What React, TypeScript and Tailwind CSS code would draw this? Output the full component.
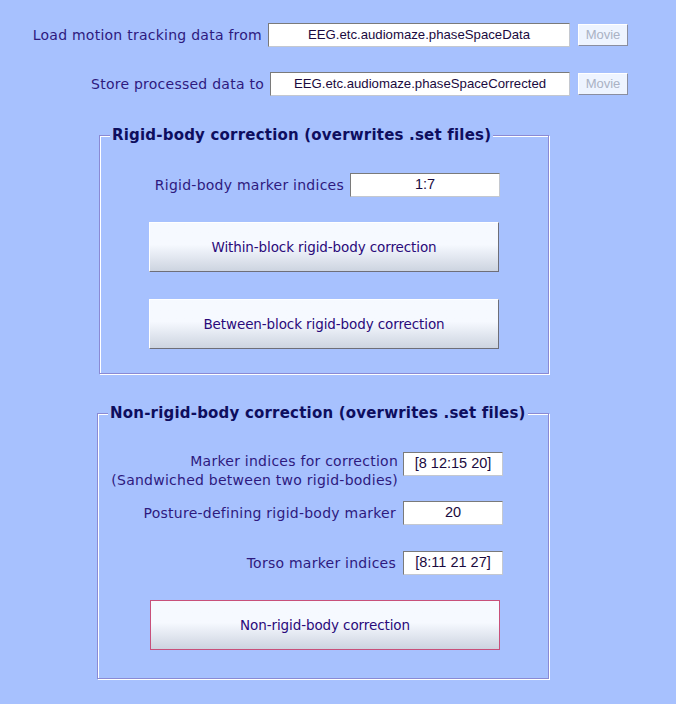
import type { ReactNode } from 'react';

const labelCls = "text-[14px] text-[#2e1a7e] tracking-[0.25px] font-['DejaVu_Sans',sans-serif] leading-[19px] whitespace-nowrap";

function Field({ value, className = '' }: { value: string; className?: string }) {
  return (
    <div
      className={`h-[24px] bg-white border border-t-[#7a7a7a] border-l-[#7a7a7a] border-b-[#c4c8d0] border-r-[#c4c8d0] flex items-center justify-center text-[#1a0a3e] font-['Liberation_Sans',sans-serif] ${className}`}
    >
      {value}
    </div>
  );
}

function MovieButton() {
  return (
    <div className="w-[50px] h-[22px] bg-[#eef4ff] border border-t-white border-l-white border-b-[#8a8ea0] border-r-[#8a8ea0] flex items-center justify-center text-[13px] text-[#aab2c4] font-['Liberation_Sans',sans-serif]">
      Movie
    </div>
  );
}

function BigButton({ children, danger = false }: { children: ReactNode; danger?: boolean }) {
  return (
    <button
      className={`${danger ? 'w-[350px] outline outline-1 -outline-offset-1 outline-[#c8507a]' : 'w-[350px]'} h-[50px] bg-gradient-to-b from-[#f6f9ff] from-45% to-[#cdd4e0] border border-t-white border-l-white border-b-[#6e6e78] border-r-[#6e6e78] text-[13.5px] text-[#2a0a7a] font-['DejaVu_Sans',sans-serif] tracking-[-0.1px]`}
    >
      {children}
    </button>
  );
}

function GroupBox({ title, children, className = '' }: { title: string; children: ReactNode; className?: string }) {
  return (
    <div className={`relative border border-[#8a8ad4] shadow-[inset_1px_1px_0_#ffffff,1px_1px_0_#ffffff] ${className}`}>
      <div className="absolute left-[10px] -top-[12px] bg-[#a7c1fe] px-[2px] text-[15px] font-bold text-[#0e0e5e] tracking-[0.2px] font-['DejaVu_Sans',sans-serif] leading-[22px] whitespace-nowrap">
        {title}
      </div>
      {children}
    </div>
  );
}

export default function App() {
  return (
    <div className="w-[676px] h-[704px] bg-[#a7c1fe] overflow-hidden">
      <div className="pt-[23px] flex flex-col">
        <div className="flex items-center">
          <div className={`${labelCls} w-[262px] text-right`}>Load motion tracking data from</div>
          <Field value="EEG.etc.audiomaze.phaseSpaceData" className="ml-[6px] w-[302px] text-[13.2px]" />
          <div className="ml-[8px]"><MovieButton /></div>
        </div>
        <div className="flex items-center mt-[25px]">
          <div className={`${labelCls} w-[264px] text-right`}>Store processed data to</div>
          <Field value="EEG.etc.audiomaze.phaseSpaceCorrected" className="ml-[6px] w-[300px] text-[13.2px]" />
          <div className="ml-[8px]"><MovieButton /></div>
        </div>
      </div>

      <GroupBox title="Rigid-body correction (overwrites .set files)" className="ml-[99px] mt-[39px] w-[450px] h-[239px]">
        <div className="flex flex-col items-center pt-[37px]">
          <div className="flex items-center w-[352px]">
            <div className={`${labelCls} w-[196px] text-right`}>Rigid-body marker indices</div>
            <Field value="1:7" className="ml-[6px] w-[150px] text-[14.5px]" />
          </div>
          <div className="mt-[25px]">
            <BigButton>Within-block rigid-body correction</BigButton>
          </div>
          <div className="mt-[27px]">
            <BigButton>Between-block rigid-body correction</BigButton>
          </div>
        </div>
      </GroupBox>

      <GroupBox title="Non-rigid-body correction (overwrites .set files)" className="ml-[97px] mt-[39px] w-[452px] h-[266px]">
        <div className="flex flex-col pt-[38px]">
          <div className="flex items-start">
            <div className={`${labelCls} w-[300px] text-right`}>
              Marker indices for correction
              <br />
              (Sandwiched between two rigid-bodies)
            </div>
            <Field value="[8 12:15 20]" className="ml-[5px] w-[100px] text-[14.5px]" />
          </div>
          <div className="flex items-center mt-[11px]">
            <div className={`${labelCls} w-[298px] text-right`}>Posture-defining rigid-body marker</div>
            <Field value="20" className="ml-[7px] w-[100px] text-[14.5px]" />
          </div>
          <div className="flex items-center mt-[26px]">
            <div className={`${labelCls} w-[298px] text-right`}>Torso marker indices</div>
            <Field value="[8:11 21 27]" className="ml-[7px] w-[100px] text-[14.5px]" />
          </div>
          <div className="mt-[25px] ml-[52px]">
            <BigButton danger>Non-rigid-body correction</BigButton>
          </div>
        </div>
      </GroupBox>
    </div>
  );
}
